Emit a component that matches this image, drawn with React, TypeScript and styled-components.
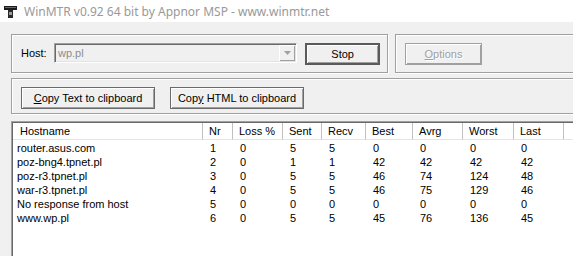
import React from 'react';
import styled, { createGlobalStyle } from 'styled-components';

const GlobalStyle = createGlobalStyle`
  html, body {
    margin: 0;
    padding: 0;
    background: #f0f0f0;
  }
`

const hops = [
  { host: 'router.asus.com', nr: 1, loss: 0, sent: 5, recv: 5, best: 0, avrg: 0, worst: 0, last: 0 },
  { host: 'poz-bng4.tpnet.pl', nr: 2, loss: 0, sent: 1, recv: 1, best: 42, avrg: 42, worst: 42, last: 42 },
  { host: 'poz-r3.tpnet.pl', nr: 3, loss: 0, sent: 5, recv: 5, best: 46, avrg: 74, worst: 124, last: 48 },
  { host: 'war-r3.tpnet.pl', nr: 4, loss: 0, sent: 5, recv: 5, best: 46, avrg: 75, worst: 129, last: 46 },
  { host: 'No response from host', nr: 5, loss: 0, sent: 0, recv: 0, best: 0, avrg: 0, worst: 0, last: 0 },
  { host: 'www.wp.pl', nr: 6, loss: 0, sent: 5, recv: 5, best: 45, avrg: 76, worst: 136, last: 45 },
]

const columns = ['Hostname', 'Nr', 'Loss %', 'Sent', 'Recv', 'Best', 'Avrg', 'Worst', 'Last']

const TitleIcon = () => (
  <svg width="13" height="12" viewBox="0 0 13 12">
    <rect x="0" y="0" width="13" height="4" fill="#1a1a1a" />
    <rect x="1" y="1" width="11" height="1" fill="#6a6a6a" />
    <rect x="4" y="4" width="5" height="8" fill="#2a2a2a" />
    <rect x="5" y="6" width="3" height="3" fill="#9a9a9a" />
  </svg>
)

const App = () => {
  return (
    <Window>
      <GlobalStyle />
      <TitleBar>
        <TitleIcon />
        <span>WinMTR v0.92 64 bit by Appnor MSP - www.winmtr.net</span>
      </TitleBar>
      <Body>
        <TopRow>
          <GroupBox $width={377}>
            <Label>Host:</Label>
            <Combo>
              <span>wp.pl</span>
              <ComboArrow>
                <svg width="7" height="4" viewBox="0 0 7 4">
                  <path d="M0 0 H7 L3.5 4 Z" fill="#a0a0a0" />
                </svg>
              </ComboArrow>
            </Combo>
            <Button $default $width={75}><span>Stop</span></Button>
          </GroupBox>
          <GroupBox $width={220}>
            <Button $disabled $width={77}><span><u>O</u>ptions</span></Button>
          </GroupBox>
        </TopRow>
        <GroupBox $width={600} $gap={15} $padBottom={4} $spaceTop={5}>
          <Button $width={134}><span><u>C</u>opy Text to clipboard</span></Button>
          <Button $width={134}><span>Cop<u>y</u> HTML to clipboard</span></Button>
        </GroupBox>
        <ListView>
          <Grid>
            {columns.map((c, i) => (
              <HeaderCell key={c} $first={i === 0}>{c}</HeaderCell>
            ))}
            <HeaderCell $filler />
            {hops.map(h => (
              <React.Fragment key={h.nr}>
                <Cell $first>{h.host}</Cell>
                <Cell>{h.nr}</Cell>
                <Cell>{h.loss}</Cell>
                <Cell>{h.sent}</Cell>
                <Cell>{h.recv}</Cell>
                <Cell>{h.best}</Cell>
                <Cell>{h.avrg}</Cell>
                <Cell>{h.worst}</Cell>
                <Cell>{h.last}</Cell>
                <Cell />
              </React.Fragment>
            ))}
          </Grid>
        </ListView>
      </Body>
    </Window>
  )
}

export default App

const Window = styled.div`
  width: 573px;
  height: 256px;
  overflow: hidden;
  background: #f0f0f0;
  font-family: "Liberation Sans", Arial, sans-serif;
  font-size: 11px;
  color: #000;
`
const TitleBar = styled.div`
  height: 22px;
  background: #fff;
  display: flex;
  align-items: center;
  gap: 7px;
  padding-left: 4px;
  padding-top: 1px;
  box-sizing: border-box;

  span {
    font-family: "Noto Sans", "Open Sans", sans-serif;
    font-size: 12px;
    color: #999;
    white-space: nowrap;
  }
`
const Body = styled.div`
  padding: 12px 0 0 11px;
  display: flex;
  flex-direction: column;
  width: 800px;
`
const TopRow = styled.div`
  display: flex;
  gap: 7px;
`
const GroupBox = styled.div<{ $width: number; $gap?: number; $padBottom?: number; $spaceTop?: number }>`
  box-sizing: border-box;
  width: ${p => p.$width}px;
  flex-shrink: 0;
  display: flex;
  align-items: flex-start;
  gap: ${p => p.$gap ?? 8}px;
  margin-top: ${p => p.$spaceTop ?? 0}px;
  padding: 8px 7px ${p => p.$padBottom ?? 7}px 9px;
  border: 1px solid #a0a0a0;
  box-shadow: inset 1px 1px #fff, 1px 1px #fff;
`
const Label = styled.span`
  width: 25px;
  height: 20px;
  line-height: 20px;
`
const Combo = styled.div`
  box-sizing: border-box;
  width: 244px;
  height: 20px;
  display: flex;
  align-items: center;
  justify-content: space-between;
  padding: 0 1px 0 3px;
  background: #f0f0f0;
  border-top: 1px solid #a0a0a0;
  border-left: 1px solid #a0a0a0;
  border-right: 1px solid #fff;
  border-bottom: 1px solid #fff;
  box-shadow: inset 1px 1px #696969, inset -1px -1px #e3e3e3;
  color: #8d8d8d;
`
const ComboArrow = styled.div`
  width: 16px;
  height: 16px;
  display: flex;
  align-items: center;
  justify-content: center;
  background: #f0f0f0;
  box-shadow: inset 1px 1px #fff, inset -1px -1px #a0a0a0;
`
const Button = styled.div<{ $width: number; $default?: boolean; $disabled?: boolean }>`
  box-sizing: border-box;
  width: ${p => p.$width}px;
  height: 22px;
  display: flex;
  align-items: center;
  justify-content: center;
  background: #f0f0f0;
  white-space: pre;
  border: ${p => (p.$default ? '2px solid #5a5a5a' : p.$disabled ? '1px solid #a0a0a0' : '1px solid #6a6a6a')};
  box-shadow: inset 1px 1px #fff, inset -1px -1px #a0a0a0;
  color: ${p => (p.$disabled ? '#a0a0a0' : '#000')};
  text-shadow: ${p => (p.$disabled ? '1px 1px #fff' : 'none')};

  u {
    text-underline-offset: 1px;
  }
`
const ListView = styled.div`
  margin-top: 7px;
  height: 200px;
  background: #fff;
  border-top: 1px solid #a0a0a0;
  border-left: 1px solid #a0a0a0;
  box-shadow: inset 1px 1px #696969;
  padding: 1px 0 0 1px;
`
const Grid = styled.div`
  display: grid;
  grid-template-columns: 190px 30px 50px 39px 44px 47px 50px 51px 50px 1fr;
  grid-template-rows: 18px;
  grid-auto-rows: 14px;
`
const HeaderCell = styled.div<{ $first?: boolean; $filler?: boolean }>`
  height: 17px;
  display: flex;
  align-items: center;
  padding-left: ${p => (p.$first ? 7 : 6)}px;
  border-right: ${p => (p.$filler ? 'none' : '1px solid #c0c0c0')};
  border-bottom: 1px solid #e5e5e5;
  box-sizing: border-box;
`
const Cell = styled.div<{ $first?: boolean }>`
  padding-left: ${p => (p.$first ? 4 : 7)}px;
  line-height: 14px;
  white-space: nowrap;
`
